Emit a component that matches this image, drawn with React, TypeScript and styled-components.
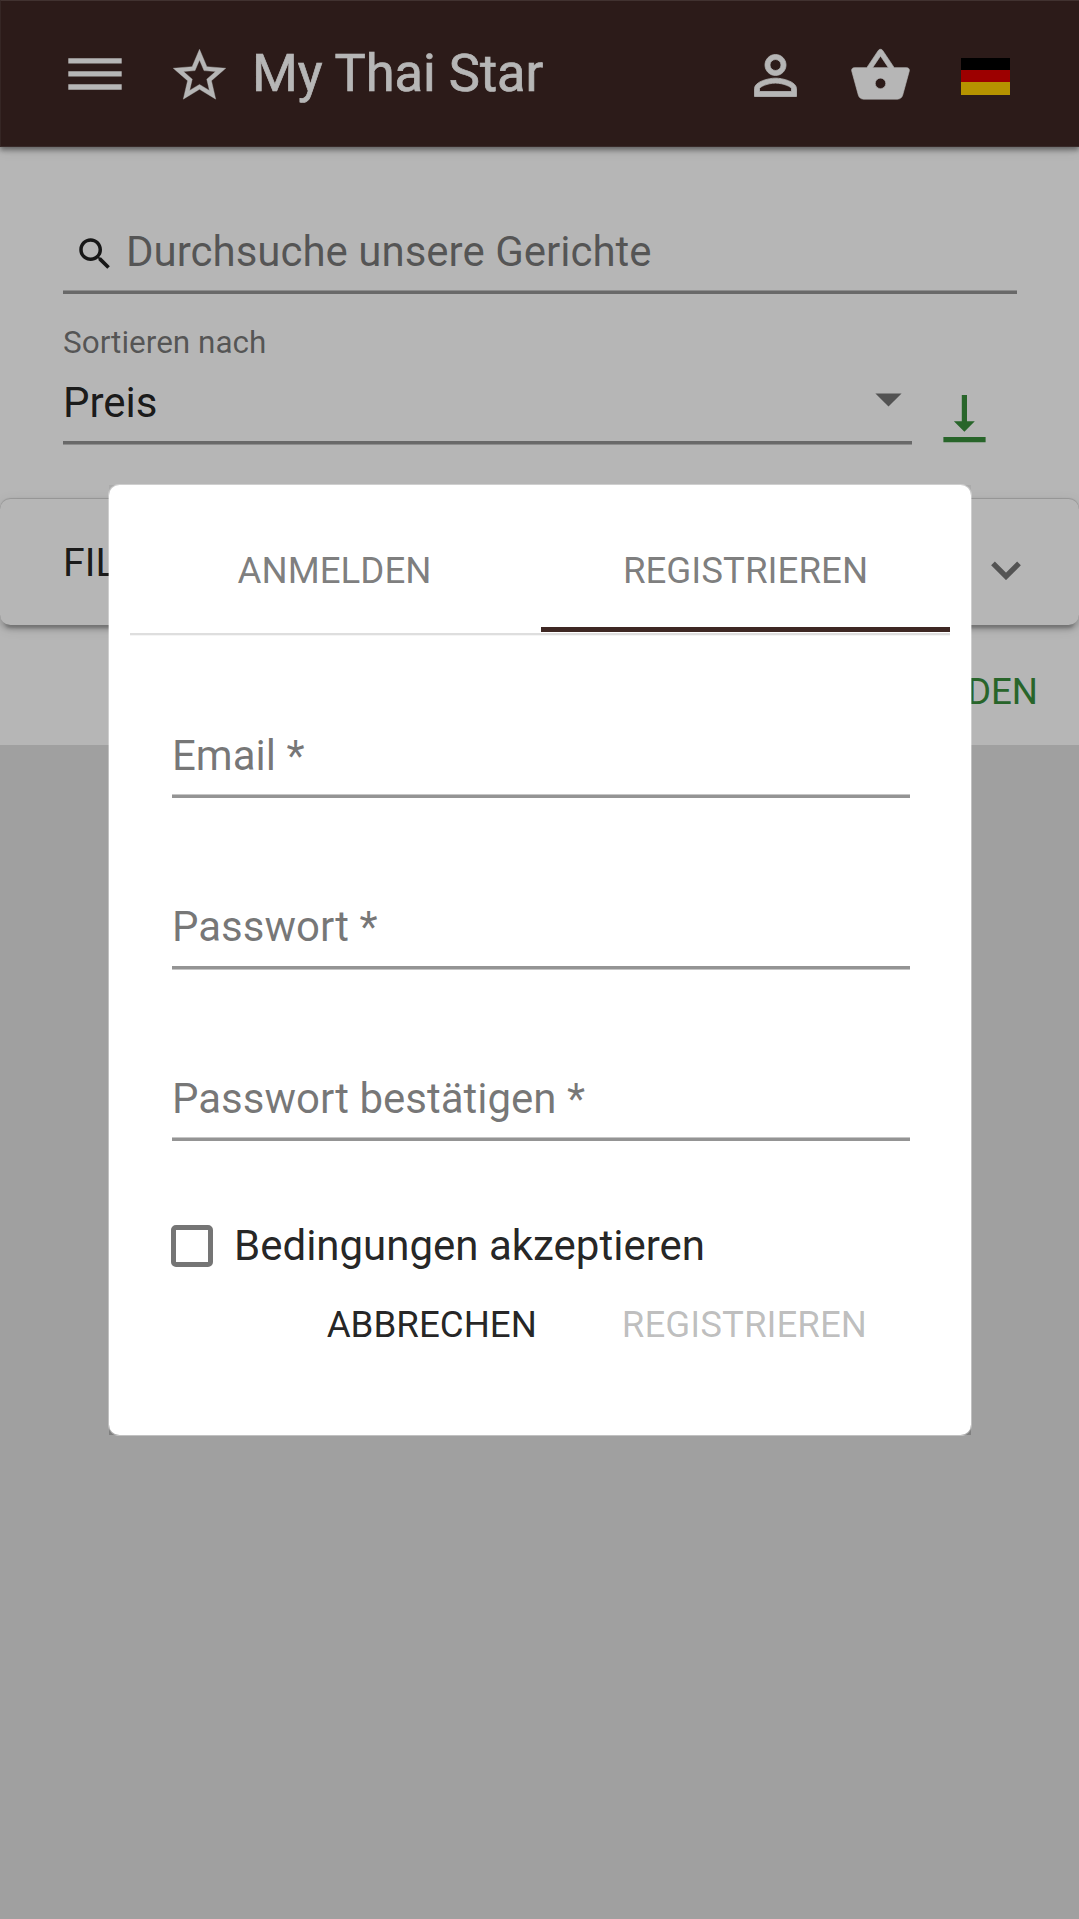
import React from "react";
import styled, { createGlobalStyle, css } from "styled-components";

const GlobalStyle = createGlobalStyle`
  *, *::before, *::after { box-sizing: border-box; }
  html, body { margin: 0; padding: 0; }
  body { font-family: Roboto, "Liberation Sans", sans-serif; color: rgba(0, 0, 0, 0.87); }
  button { font: inherit; color: inherit; border: 0; padding: 0; background: none; }
`;

const Page = styled.div`
  position: relative;
  width: 1079px;
  height: 1919px;
  overflow: hidden;
  background: #e0e0e0;
`;

const Toolbar = styled.header`
  position: relative;
  z-index: 1;
  display: flex;
  align-items: center;
  height: 147px;
  padding: 0 69px 1px 68px;
  background: #3e2723;
  color: #fff;
  border-top: 1px solid #5b4744;
  border-left: 1px solid #4b3633;
  border-bottom: 1px solid #4f3c3a;
  box-shadow: 0 3px 5px rgba(0, 0, 0, 0.4), 0 2px 13px rgba(0, 0, 0, 0.12);
`;

const Title = styled.h1`
  flex: 1;
  margin: 0 0 0 21px;
  font-size: 52.4px;
  line-height: 52px;
  font-weight: 400;
  -webkit-text-stroke: 0.7px currentColor;
`;

const ToolButton = styled.button<{ $gap: number }>`
  display: flex;
  margin: 4px 0 0 ${(p) => p.$gap}px;
`;

const Icon = styled.svg<{ $size?: number; $weight?: number }>`
  display: block;
  flex: none;
  width: ${(p) => p.$size ?? 63}px;
  height: ${(p) => p.$size ?? 63}px;
  fill: currentColor;
  stroke: currentColor;
  stroke-width: ${(p) => p.$weight ?? 0};
`;

const MenuIcon = styled.svg`
  display: block;
  flex: none;
  width: 54px;
  height: 32px;
  margin-bottom: 2px;
  fill: currentColor;
`;

const Flag = styled.div`
  width: 49px;
  height: 37px;
  margin: 6px 0 0 49px;
  background: linear-gradient(#000 0 12px, #dd0000 12px 24.5px, #ffce00 24.5px);
`;

const Content = styled.main`
  height: 598px;
  background: #fff;
`;

const SearchSection = styled.section`
  height: 352px;
  padding: 80px 62px 0 63px;
`;

const underline = css<{ $edge?: "top" | "bottom" }>`
  &::after {
    content: "";
    display: block;
    height: 4px;
    background: ${(p) =>
      p.$edge === "bottom"
        ? "linear-gradient(#949494 0 3px, #c6c6c6 3px)"
        : "linear-gradient(#c6c6c6 0 1px, #949494 1px)"};
  }
`;

const SearchField = styled.div`
  ${underline}
`;

const SearchRow = styled.div`
  display: flex;
  align-items: flex-start;
  height: 63px;
  padding-left: 10.5px;
  color: rgba(0, 0, 0, 0.87);
`;

const SearchIcon = styled(Icon)`
  margin-top: 6px;
`;

const Text = styled.span<{ $muted?: boolean }>`
  display: block;
  font-size: 42px;
  line-height: 48px;
  white-space: pre;
  color: ${(p) => (p.$muted ? "rgba(0, 0, 0, 0.54)" : "rgba(0, 0, 0, 0.87)")};
`;

const SearchText = styled(Text)`
  margin: 1px 0 0 10.5px;
`;

const SortRow = styled.div`
  display: flex;
  align-items: flex-end;
  gap: 31px;
  margin-top: 31px;
  color: #388e3c;
`;

const SortField = styled.div`
  width: 849px;
  ${underline}
`;

const SortLabel = styled.span`
  display: block;
  font-size: 31.5px;
  line-height: 36px;
  color: rgba(0, 0, 0, 0.54);
`;

const SortValue = styled.div`
  display: flex;
  justify-content: space-between;
  height: 80px;
  padding: 18px 10px 0 0;
  color: rgba(0, 0, 0, 0.54);
`;

const Caret = styled.svg`
  width: 27px;
  height: 14px;
  margin-top: 14px;
  fill: currentColor;
`;

const SortDirection = styled.svg`
  width: 43px;
  height: 48px;
  margin-bottom: 2px;
  fill: currentColor;
`;

const FilterPanel = styled.section`
  display: flex;
  align-items: center;
  justify-content: space-between;
  height: 126px;
  padding: 0 58px 0 63px;
  border-radius: 10.5px;
  background: #fff;
  font-size: 39.3px;
  line-height: 46px;
  box-shadow: 0 8px 3px -5px rgba(0, 0, 0, 0.2), 0 5px 5px rgba(0, 0, 0, 0.14),
    0 3px 13px rgba(0, 0, 0, 0.12), 0 -1px 1px rgba(0, 0, 0, 0.16);
`;

const FilterTitle = styled.span`
  margin-top: 2px;
`;

const Chevron = styled.svg`
  width: 30px;
  height: 19px;
  margin-top: 17px;
  fill: none;
  stroke: rgba(0, 0, 0, 0.54);
  stroke-width: 5.3;
`;

const FilterActions = styled.div`
  display: flex;
  justify-content: flex-end;
  padding: 46px 41px 0;
`;

const Button = styled.button<{ $tone?: "accent" | "disabled" }>`
  font-size: 36.7px;
  line-height: 42px;
  white-space: nowrap;
  color: ${(p) =>
    p.$tone === "accent"
      ? "#388e3c"
      : p.$tone === "disabled"
        ? "rgba(0, 0, 0, 0.26)"
        : "rgba(0, 0, 0, 0.87)"};
`;

const Backdrop = styled.div`
  position: absolute;
  inset: 0;
  z-index: 2;
  display: flex;
  justify-content: center;
  align-items: flex-start;
  padding: 485px 0 0 1px;
  background: rgba(0, 0, 0, 0.288);
`;

const DialogFrame = styled.div`
  width: 862px;
  height: 950px;
  background: linear-gradient(rgba(0, 0, 0, 0.06), rgba(0, 0, 0, 0.2));
`;

const Dialog = styled.div`
  height: 100%;
  padding: 21px;
  border-radius: 10.5px;
  background: #fff;
  box-shadow: 0 0 0 1px rgba(255, 255, 255, 0.35);
`;

const Tabs = styled.div`
  display: grid;
  grid-template-columns: 410px 1fr;
  height: 129px;
  border-bottom: 2px solid #dedede;
  box-shadow: 0 1px #f5f5f5;
`;

const Tab = styled.button<{ $active?: boolean }>`
  display: flex;
  flex-direction: column;
  align-items: center;
  justify-content: space-between;
  height: 126px;
  padding: 44px ${(p) => (p.$active ? 0 : 1)}px 0 0;
  margin-left: ${(p) => (p.$active ? 1 : 0)}px;
  font-size: 36.7px;
  line-height: 42px;
  color: rgba(0, 0, 0, 0.52);

  &::after {
    content: "";
    width: 100%;
    height: 5px;
    background: ${(p) => (p.$active ? "#3e2723" : "transparent")};
  }
`;

const Form = styled.form`
  padding: 96px 40px 0 42px;
`;

const Field = styled.label<{ $edge?: "top" | "bottom"; $gap: number }>`
  display: block;
  margin-bottom: ${(p) => p.$gap}px;
  ${underline}
`;

const FieldText = styled(Text)<{ $drop?: number }>`
  height: 63px;
  padding-top: ${(p) => p.$drop ?? 0}px;
`;

const CheckRow = styled.label`
  display: flex;
  align-items: center;
  gap: 21px;
  height: 48px;
  margin-left: -1px;
`;

const CheckBox = styled.span`
  width: 42px;
  height: 42px;
  border: 5px solid #757575;
  border-radius: 5px;
`;

const Actions = styled.div`
  display: flex;
  justify-content: flex-end;
  gap: 85px;
  margin-top: 34px;
  padding-right: 43px;
`;

export default function App() {
  return (
    <>
      <GlobalStyle />
      <Page>
        <Toolbar>
          <ToolButton $gap={-1} aria-label="Menü">
            <MenuIcon viewBox="0 0 54 32">
              <path d="M.3.2h53.4v5.4H.3zM.3 13.2h53.4v5.4H.3zM.3 26.3h53.4v5.4H.3z" />
            </MenuIcon>
          </ToolButton>
          <ToolButton $gap={46} aria-label="Start">
            <Icon $weight={0.15} viewBox="0 0 24 24">
              <path d="M22 9.24l-7.19-.62L12 2 9.19 8.63 2 9.24l5.46 4.73L5.82 21 12 17.27 18.18 21l-1.63-7.03L22 9.24zM12 15.4l-3.76 2.27 1-4.28-3.32-2.88 4.38-.38L12 6.1l1.71 4.04 4.38.38-3.32 2.88 1 4.28L12 15.4z" />
            </Icon>
          </ToolButton>
          <Title>My Thai Star</Title>
          <ToolButton $gap={0} aria-label="Anmelden">
            <Icon $weight={0.3} viewBox="0 0 24 24">
              <path d="M12 5.9c1.16 0 2.1.94 2.1 2.1s-.94 2.1-2.1 2.1S9.9 9.16 9.9 8s.94-2.1 2.1-2.1m0 9c2.97 0 6.1 1.46 6.1 2.1v1.1H5.9V17c0-.64 3.13-2.1 6.1-2.1M12 4C9.79 4 8 5.79 8 8s1.79 4 4 4 4-1.79 4-4-1.79-4-4-4zm0 9c-2.67 0-8 1.34-8 4v3h16v-3c0-2.66-5.33-4-8-4z" />
            </Icon>
          </ToolButton>
          <ToolButton $gap={42} aria-label="Warenkorb">
            <Icon $weight={0.25} viewBox="0 0 24 24">
              <path d="M17.21 9l-4.38-6.56c-.19-.28-.51-.42-.83-.42-.32 0-.64.14-.83.43L6.79 9H2c-.55 0-1 .45-1 1 0 .09.01.18.04.27l2.54 9.27c.23.84 1 1.46 1.92 1.46h13c.92 0 1.69-.62 1.93-1.46l2.54-9.27L23 10c0-.55-.45-1-1-1h-4.79zM9 9l3-4.4L15 9H9zm3 8c-1.1 0-2-.9-2-2s.9-2 2-2 2 .9 2 2-.9 2-2 2z" />
            </Icon>
          </ToolButton>
          <Flag />
        </Toolbar>

        <Content>
          <SearchSection>
            <SearchField>
              <SearchRow>
                <SearchIcon $size={42} viewBox="0 0 24 24">
                  <path d="M15.5 14h-.79l-.28-.27C15.41 12.59 16 11.11 16 9.5 16 5.91 13.09 3 9.5 3S3 5.91 3 9.5 5.91 16 9.5 16c1.61 0 3.09-.59 4.23-1.57l.27.28v.79l5 4.99L20.49 19l-4.99-5zm-6 0C7.01 14 5 11.99 5 9.5S7.01 5 9.5 5 14 7.01 14 9.5 11.99 14 9.5 14z" />
                </SearchIcon>
                <SearchText $muted>Durchsuche unsere Gerichte</SearchText>
              </SearchRow>
            </SearchField>
            <SortRow>
              <SortField $edge="bottom">
                <SortLabel>Sortieren nach</SortLabel>
                <SortValue>
                  <Text>Preis</Text>
                  <Caret viewBox="0 0 27 14">
                    <path d="M.4.4h26.2L13.5 13.5z" />
                  </Caret>
                </SortValue>
              </SortField>
              <SortDirection viewBox="0 0 43 48">
                <path d="M18.8 0h5.2v26.3h7.8L21.4 36.8 10.9 26.3h7.9zM.4 42h42.2v5.2H.4z" />
              </SortDirection>
            </SortRow>
          </SearchSection>
          <FilterPanel>
            <FilterTitle>FILTER</FilterTitle>
            <Chevron viewBox="0 0 30 19">
              <path d="M2 2.4l13 13 13-13" />
            </Chevron>
          </FilterPanel>
          <FilterActions>
            <Button $tone="accent">ANWENDEN</Button>
          </FilterActions>
        </Content>

        <Backdrop>
          <DialogFrame>
            <Dialog role="dialog">
              <Tabs>
                <Tab>ANMELDEN</Tab>
                <Tab $active>REGISTRIEREN</Tab>
              </Tabs>
              <Form>
                <Field $gap={105}>
                  <FieldText $muted $drop={1}>Email *</FieldText>
                </Field>
                <Field $edge="bottom" $gap={104}>
                  <FieldText $muted>Passwort *</FieldText>
                </Field>
                <Field $gap={81}>
                  <FieldText $muted $drop={1}>Passwort bestätigen *</FieldText>
                </Field>
                <CheckRow>
                  <CheckBox />
                  <Text>Bedingungen akzeptieren</Text>
                </CheckRow>
                <Actions>
                  <Button type="button">ABBRECHEN</Button>
                  <Button type="button" $tone="disabled">
                    REGISTRIEREN
                  </Button>
                </Actions>
              </Form>
            </Dialog>
          </DialogFrame>
        </Backdrop>
      </Page>
    </>
  );
}
